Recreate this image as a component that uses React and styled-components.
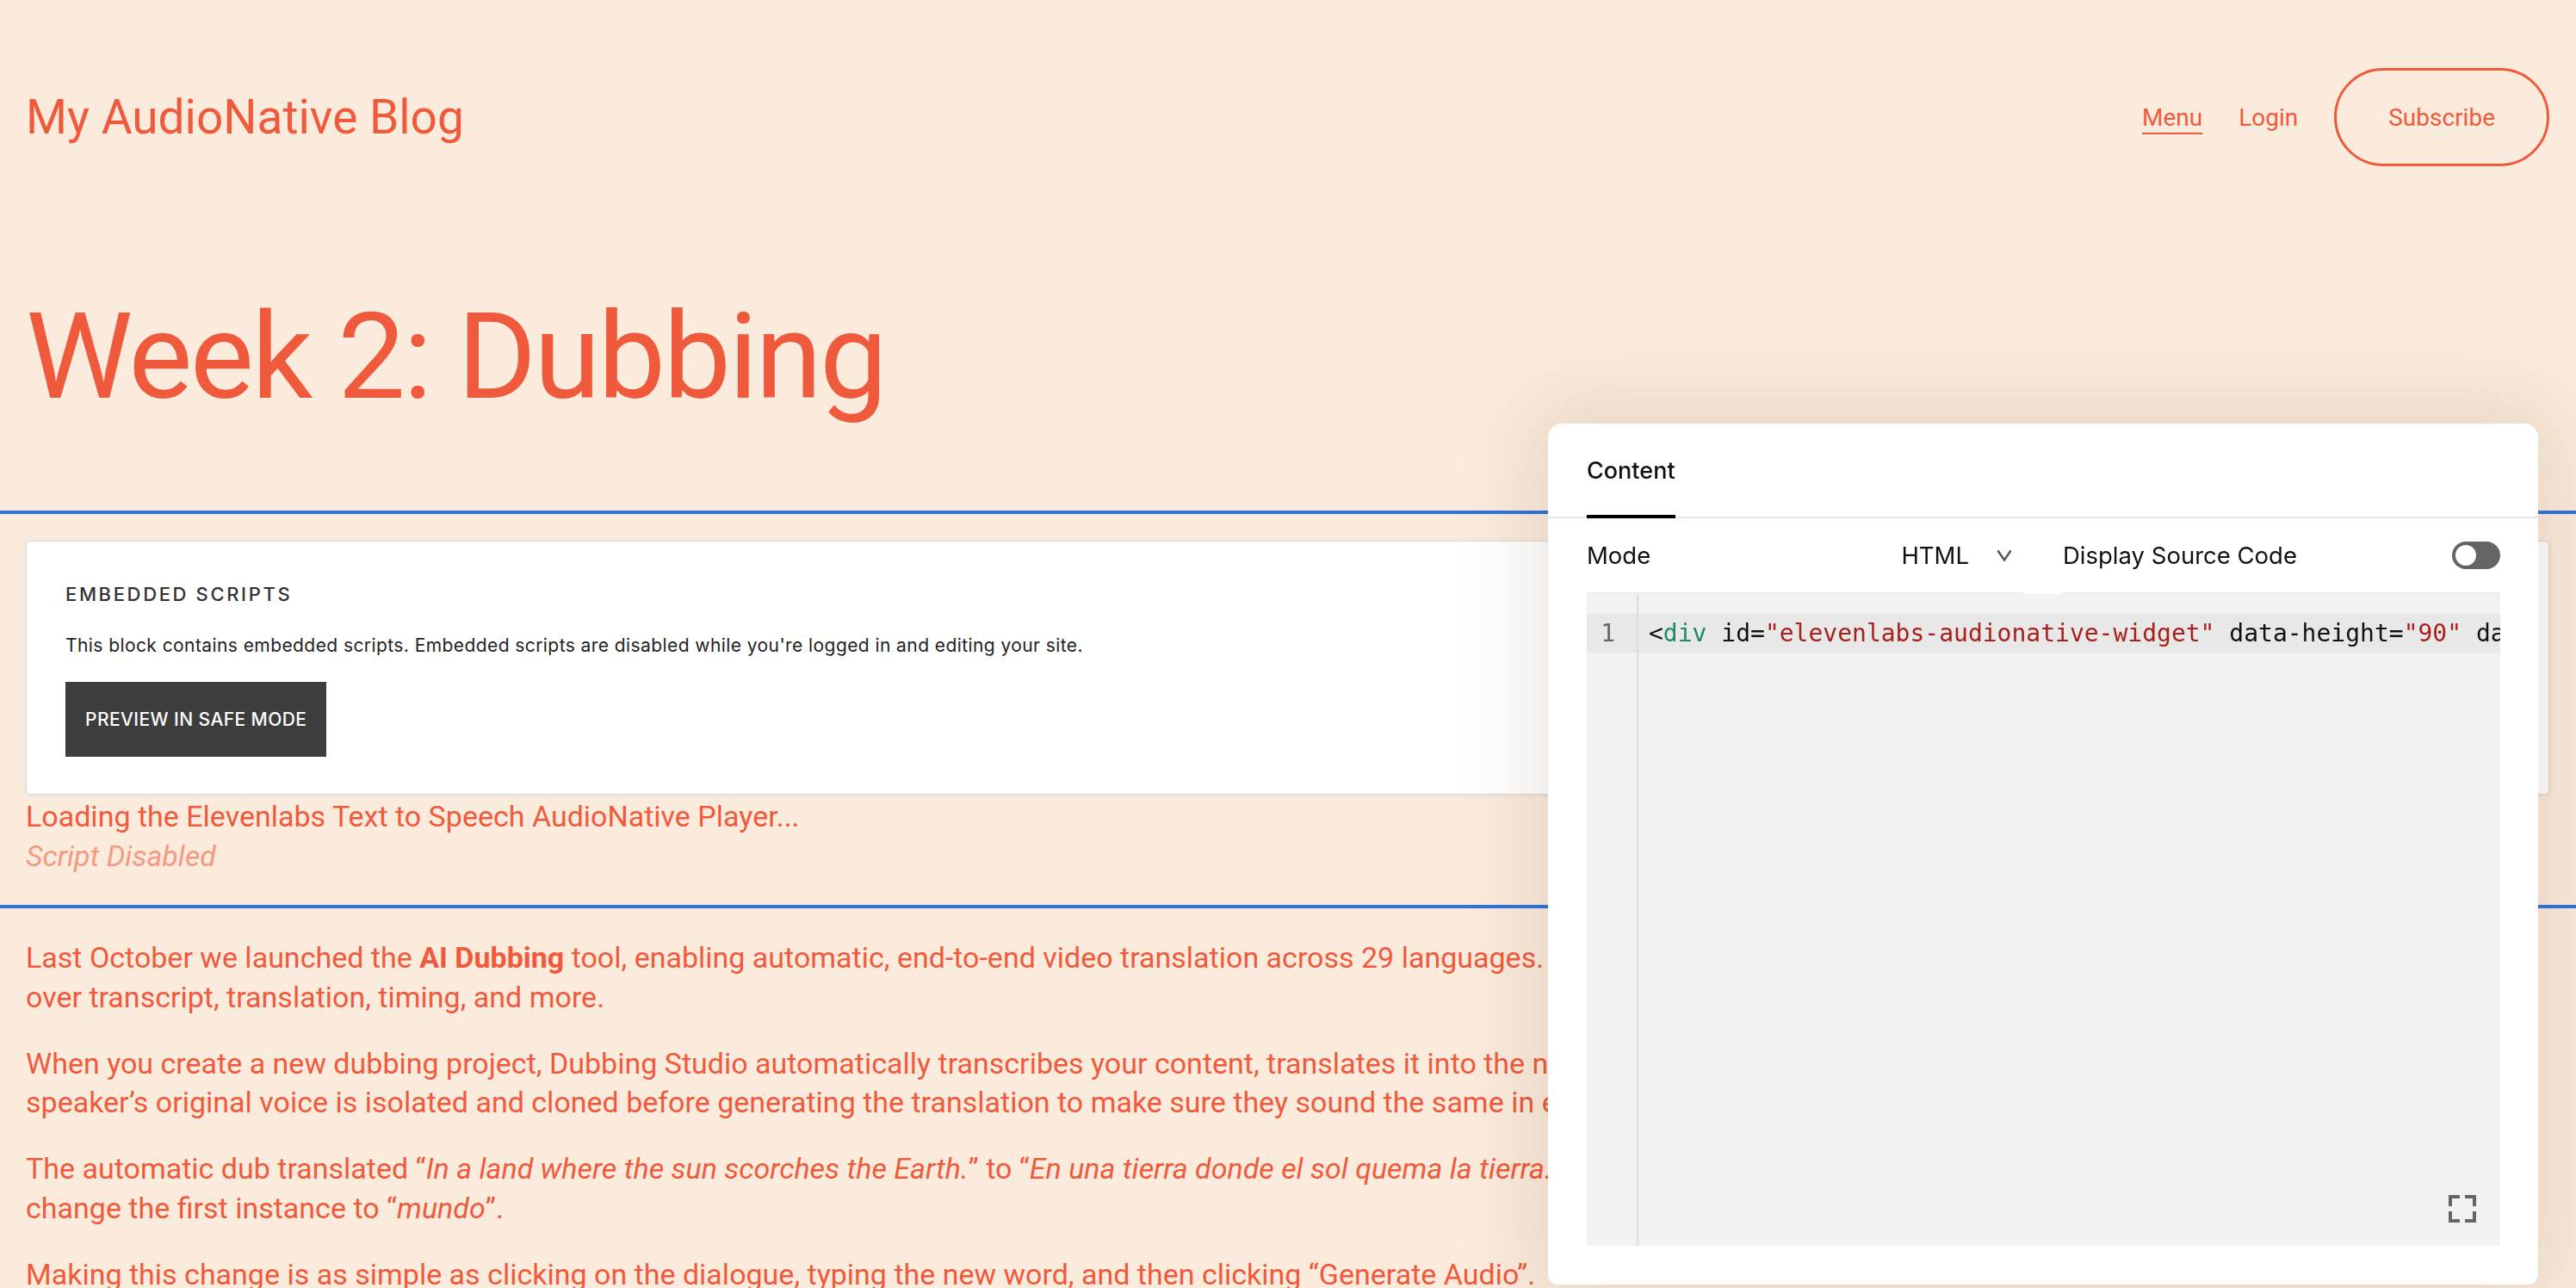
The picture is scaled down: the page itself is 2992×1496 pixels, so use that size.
import React from 'react';
import styled, { createGlobalStyle } from 'styled-components';

const accent = '#f05a3c';
const selection = '#2b73e6';

const GlobalStyle = createGlobalStyle`
  html, body {
    margin: 0;
    padding: 0;
  }
  body {
    background: #fbebdd;
    overflow: hidden;
    font-family: Roboto, "Liberation Sans", sans-serif;
  }
  * {
    box-sizing: border-box;
  }
`;

const Page = styled.div`
  position: relative;
  height: 100vh;
  overflow: hidden;
  color: ${accent};
`;

const Header = styled.header`
  display: flex;
  align-items: center;
  justify-content: space-between;
  padding: 79px 31px 0 30px;
`;

const SiteTitle = styled.a`
  font-size: 55px;
  color: inherit;
  text-decoration: none;
`;

const Nav = styled.nav`
  display: flex;
  align-items: center;
  gap: 42px;
`;

const NavLink = styled.a`
  font-size: 28px;
  color: inherit;
  text-decoration: ${props => (props.$active ? 'underline' : 'none')};
  text-decoration-thickness: 2px;
  text-underline-offset: 8px;
`;

const SubscribeButton = styled.button`
  height: 114px;
  padding: 0 60px;
  border: 3px solid ${accent};
  border-radius: 57px;
  background: transparent;
  color: ${accent};
  font-family: Roboto, sans-serif;
  font-size: 28px;
`;

const PageTitle = styled.h1`
  margin: 137px 0 95px;
  padding: 0 30px;
  font-size: 140px;
  font-weight: 400;
  line-height: 1.2;
  letter-spacing: -0.02em;
`;

const CodeBlock = styled.section`
  border-top: 4px solid ${selection};
  border-bottom: 4px solid ${selection};
  padding: 31px 31px 34px 30px;
`;

const ScriptCard = styled.div`
  background: #fff;
  border: 1px solid #dadada;
  border-radius: 4px;
  box-shadow: 0 1px 4px rgba(0, 0, 0, 0.08);
  padding: 48px 45px 43px;
  margin-bottom: 3px;
  font-family: Inter, sans-serif;
`;

const CardTitle = styled.div`
  font-size: 22px;
  font-weight: 500;
  line-height: 27px;
  letter-spacing: 0.12em;
  text-transform: uppercase;
  color: #333;
`;

const CardText = styled.p`
  margin: 34px 0 0;
  font-size: 21px;
  line-height: 24px;
  letter-spacing: 0.02em;
  color: #222;
`;

const SafeModeButton = styled.button`
  display: inline-flex;
  align-items: center;
  height: 87px;
  margin-top: 30px;
  padding: 0 23px;
  border: 0;
  background: #3d3d3d;
  color: #fff;
  font-family: Inter, sans-serif;
  font-size: 21px;
  font-weight: 500;
  letter-spacing: 0.02em;
  text-transform: uppercase;
`;

const PlayerLine = styled.div`
  font-size: 34px;
  line-height: 45.5px;
  font-style: ${props => (props.$muted ? 'italic' : 'normal')};
  color: ${props => (props.$muted ? '#f39a83' : accent)};
`;

const Article = styled.article`
  padding: 35px 31px 0 30px;
`;

const Paragraph = styled.p`
  margin: 0 0 31.5px;
  font-size: 34px;
  line-height: 45.5px;
`;

const EditorPanel = styled.aside`
  position: fixed;
  top: 492px;
  left: 1798px;
  width: 1150px;
  height: 1000px;
  display: flex;
  flex-direction: column;
  padding: 0 44px 45px 45px;
  background: #fff;
  border-radius: 16px 16px 12px 12px;
  box-shadow: 0 0 90px 20px rgba(90, 50, 10, 0.12);
  font-family: Inter, sans-serif;
  color: #111;
`;

const TabBar = styled.div`
  display: flex;
  margin: 0 -44px 0 -45px;
  padding: 0 44px 0 45px;
  border-bottom: 2px solid #e6e6e6;
`;

const Tab = styled.div`
  padding: 38px 0 35px;
  margin-bottom: -2px;
  font-size: 27px;
  font-weight: 500;
  line-height: 33px;
  border-bottom: 4px solid #000;
`;

const SettingsRow = styled.div`
  display: grid;
  grid-template-columns: 1fr 1fr;
  gap: 45px;
  height: 88px;
`;

const Setting = styled.div`
  display: flex;
  align-items: center;
  justify-content: space-between;
  border-bottom: 2px solid #ececec;
  font-size: 27.5px;
`;

const SelectValue = styled.div`
  display: flex;
  align-items: center;
  gap: 32px;
  padding-right: 14px;
`;

const Toggle = styled.div`
  position: relative;
  width: 56px;
  height: 32px;
  border-radius: 16px;
  background: #646464;

  &::after {
    content: '';
    position: absolute;
    top: 4px;
    left: 4px;
    width: 24px;
    height: 24px;
    border-radius: 50%;
    background: #fff;
  }
`;

const Editor = styled.div`
  position: relative;
  flex: 1;
  display: flex;
  background: #f2f2f2;
  overflow: hidden;
`;

const Gutter = styled.div`
  width: 60px;
  padding-top: 23px;
  border-right: 2px solid #dedede;
`;

const CodeArea = styled.div`
  flex: 1;
  min-width: 0;
  padding-top: 23px;
`;

const LineNumber = styled.div`
  height: 45px;
  padding-right: 25px;
  background: #e8e8e8;
  font-family: "DejaVu Sans Mono", monospace;
  font-size: 28px;
  line-height: 45px;
  text-align: right;
  color: #666;
`;

const CodeLine = styled.div`
  height: 45px;
  padding-left: 12px;
  background: #e8e8e8;
  font-family: "DejaVu Sans Mono", monospace;
  font-size: 28px;
  line-height: 45px;
  white-space: pre;
  color: #111;
`;

const Token = styled.span`
  color: ${props => (props.$kind === 'tag' ? '#1f8a5b' : '#a8201a')};
`;

const ExpandButton = styled.div`
  position: absolute;
  right: 28px;
  bottom: 27px;
  width: 32px;
  height: 32px;
  display: flex;
`;

const ChevronDown = () => (
  <svg width="18" height="14" viewBox="0 0 18 14">
    <polyline points="1.5,1.5 9,12.5 16.5,1.5" fill="none" stroke="#555" strokeWidth="2.4" />
  </svg>
);

const ExpandIcon = () => (
  <svg width="32" height="32" viewBox="0 0 32 32">
    <path
      d="M2 13V2h11M19 2h11v11M2 19v11h11M30 19v11H19"
      fill="none"
      stroke="#666"
      strokeWidth="4"
    />
  </svg>
);

const App = () => (
  <Page>
    <GlobalStyle />
    <Header>
      <SiteTitle href="#">My AudioNative Blog</SiteTitle>
      <Nav>
        <NavLink href="#" $active>Menu</NavLink>
        <NavLink href="#">Login</NavLink>
        <SubscribeButton>Subscribe</SubscribeButton>
      </Nav>
    </Header>

    <PageTitle>Week 2: Dubbing</PageTitle>

    <CodeBlock>
      <ScriptCard>
        <CardTitle>Embedded Scripts</CardTitle>
        <CardText>
          This block contains embedded scripts. Embedded scripts are disabled while you're logged in and editing your site.
        </CardText>
        <SafeModeButton>Preview in safe mode</SafeModeButton>
      </ScriptCard>
      <PlayerLine>Loading the Elevenlabs Text to Speech AudioNative Player...</PlayerLine>
      <PlayerLine $muted>Script Disabled</PlayerLine>
    </CodeBlock>

    <Article>
      <Paragraph>
        Last October we launched the <strong>AI Dubbing</strong> tool, enabling automatic, end-to-end video translation across 29 languages. Dubbing Studio now gives you full control
        <br />
        over transcript, translation, timing, and more.
      </Paragraph>
      <Paragraph>
        When you create a new dubbing project, Dubbing Studio automatically transcribes your content, translates it into the new language and dubs it. Each
        <br />
        speaker’s original voice is isolated and cloned before generating the translation to make sure they sound the same in every language.
      </Paragraph>
      <Paragraph>
        The automatic dub translated “<em>In a land where the sun scorches the Earth.</em>” to “<em>En una tierra donde el sol quema la tierra.</em>” We
        <br />
        change the first instance to “<em>mundo</em>”.
      </Paragraph>
      <Paragraph>
        Making this change is as simple as clicking on the dialogue, typing the new word, and then clicking “Generate Audio”.
      </Paragraph>
    </Article>

    <EditorPanel>
      <TabBar>
        <Tab>Content</Tab>
      </TabBar>
      <SettingsRow>
        <Setting>
          <span>Mode</span>
          <SelectValue>
            <span>HTML</span>
            <ChevronDown />
          </SelectValue>
        </Setting>
        <Setting>
          <span>Display Source Code</span>
          <Toggle />
        </Setting>
      </SettingsRow>
      <Editor>
        <Gutter>
          <LineNumber>1</LineNumber>
        </Gutter>
        <CodeArea>
          <CodeLine>
            {'<'}<Token $kind="tag">div</Token> id=<Token>"elevenlabs-audionative-widget"</Token> data-height=<Token>"90"</Token> data-width="100%" data-frameborder="no" data-scrolling="no" data-publicuserid="..." data-playerurl="https://elevenlabs.io/player/index.html"{'>'}
          </CodeLine>
        </CodeArea>
        <ExpandButton>
          <ExpandIcon />
        </ExpandButton>
      </Editor>
    </EditorPanel>
  </Page>
);

export default App;
